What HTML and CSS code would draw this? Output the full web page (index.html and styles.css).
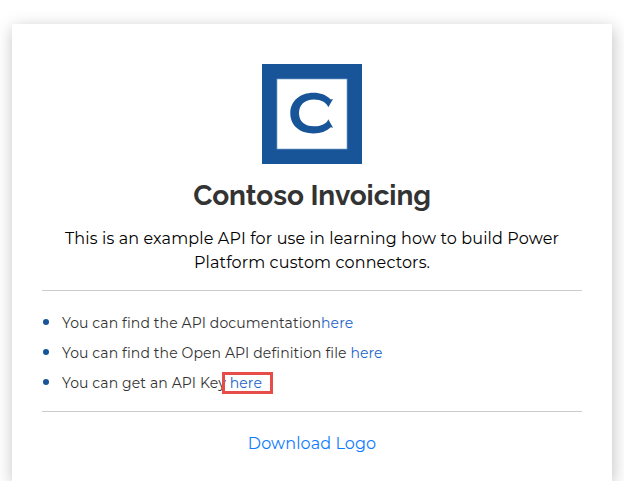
FILE: index.html
```html
<!DOCTYPE html>
<html lang="en">
<head>
<meta charset="utf-8">
<title>Contoso Invoicing</title>
<link rel="stylesheet" href="styles.css">
</head>
<body>
<main class="card">
  <svg class="logo" viewBox="0 0 100 100" role="img" aria-label="Contoso">
    <rect width="100" height="100" fill="#175498"/>
    <rect x="15" y="15" width="70" height="70" fill="#fff" stroke="#7fa3cb" stroke-width=".7"/>
    <path fill="#175498" d="M71 35L66.300 43.300C64.500 38.500 59 35.600 52 35.600C42.500 35.600 37 41 37 49.200C37 57.200 42.500 62.300 52 62.300C59 62.300 64.500 60 66.300 55.200L71 63.700L68.700 63.200C64 67.500 59 69.400 51.500 69.400C37.500 69.400 28.300 61.200 28.300 49.200C28.300 37 38 28.700 51.500 28.700C58.500 28.700 64 30.800 68.700 35.400Z"/>
  </svg>
  <h1 class="title">Contoso Invoicing</h1>
  <p class="intro">This is an example API for use in learning how to build Power<br>Platform custom connectors.</p>
  <ul class="links">
    <li><span>You can find the API documentation</span><a href="#">here</a></li>
    <li><span>You can find the Open API definition file </span><a href="#">here</a></li>
    <li><span>You can get an API Key </span><a class="marked" href="#">here</a></li>
  </ul>
  <a class="download" href="#">Download Logo</a>
</main>
</body>
</html>
```

FILE: styles.css
```css
* { box-sizing: border-box; }
html { overflow: hidden; background: #fff; }
body {
  margin: 0;
  padding: 24px 12px 0;
  height: 481px;
  overflow: hidden;
  font-family: Montserrat, Inter, sans-serif;
}
a { text-decoration: none; }
.card {
  width: 600px;
  height: 457px;
  padding: 40px 30px 0;
  background: #fff;
  box-shadow: 1px 4px 16px rgba(0, 0, 0, .25);
  text-align: center;
}
.logo { display: block; width: 100px; height: 100px; margin: 0 auto; }
.title {
  margin: 14px 0 13px;
  color: #333;
  font: 700 28px/36px Raleway, Lato, sans-serif;
  letter-spacing: -.09px;
  white-space: nowrap;
}
.intro {
  margin: 0;
  padding-bottom: 15px;
  color: #000;
  font-size: 16px;
  line-height: 24px;
  letter-spacing: .135px;
  white-space: nowrap;
}
.links {
  margin: 0;
  padding: 17px 0 13px;
  border: solid #ccc;
  border-width: 1px 0;
  list-style: none;
  color: #333;
  font-size: 14px;
  line-height: 30px;
  letter-spacing: .115px;
  text-align: left;
  white-space: pre;
  display: flex;
  flex-direction: column;
}
.links li { display: flex; align-items: center; height: 30px; }
.links li::before {
  content: "";
  width: 6px;
  height: 6px;
  margin: -3px 13px 0 1px;
  border-radius: 50%;
  background: #175498;
}
.links a { color: #1c62c9; }
.marked { position: relative; }
.marked::after {
  content: "";
  position: absolute;
  box-sizing: border-box;
  left: -8px;
  top: 4px;
  width: 51px;
  height: 22px;
  border: 3px solid #e84c48;
}
.download {
  display: block;
  margin-top: 20px;
  color: #0d7bff;
  font-size: 16px;
  line-height: 24px;
  letter-spacing: .1px;
}
```
